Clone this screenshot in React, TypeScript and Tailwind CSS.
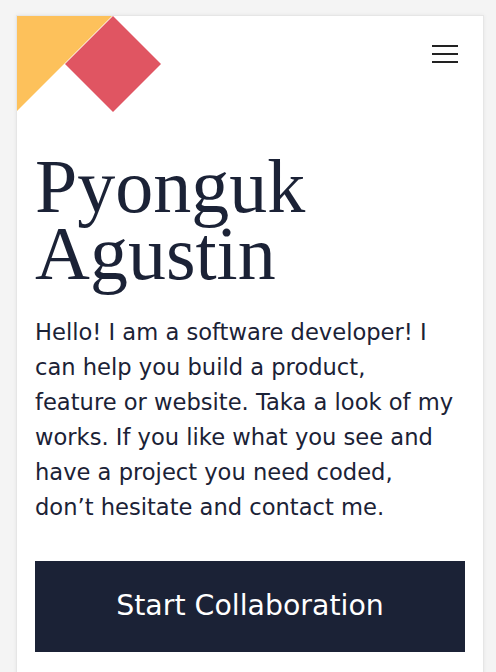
export default function App() {
  return (
    <div className="min-h-screen bg-[#f4f4f4] pl-4 pr-3 pt-[15px]">
      <div className="min-h-[680px] border border-[#e6e6e6] bg-white shadow-[0_0_4px_rgba(0,0,0,0.06)]">
        {/* header */}
        <header className="flex h-[96px] items-start justify-between">
          <Logo />
          <button className="mr-[25px] mt-[28px] flex h-[20px] w-[26px] flex-col justify-between py-[1px]">
            <span className="block h-[2px] w-full bg-[#222]" />
            <span className="block h-[2px] w-full bg-[#222]" />
            <span className="block h-[2px] w-full bg-[#222]" />
          </button>
        </header>

        <main className="px-[18px]">
          <h1
            className="mt-[41px] text-[76px] leading-[67px] text-[#1b2236]"
            style={{ fontFamily: "'Liberation Serif', serif" }}
          >
            Pyonguk
            <br />
            Agustin
          </h1>
          <p
            className="mt-[28px] text-[22.6px] leading-[35px] text-[#1b2236]"
            style={{ fontFamily: "'DejaVu Sans', sans-serif" }}
          >
            Hello! I am a software developer! I can help you build a product,
            <br />
            feature or website. Taka a look of my works. If you like what you
            see and have a project you need coded,
            <br />
            don’t hesitate and contact me.
          </p>
          <button
            className="mt-[36px] flex h-[91px] w-full items-center justify-center bg-[#1b2236] text-[28.4px] text-white"
            style={{ fontFamily: "'DejaVu Sans', sans-serif" }}
          >
            Start Collaboration
          </button>
        </main>
      </div>
    </div>
  );
}

function Logo() {
  return (
    <svg width="145" height="96" viewBox="0 0 145 96" className="block">
      <polygon points="0,0 95,0 0,95" fill="#fdc15b" />
      <polygon points="96,0 144,48 96,96 48,48" fill="#e05562" />
    </svg>
  );
}
